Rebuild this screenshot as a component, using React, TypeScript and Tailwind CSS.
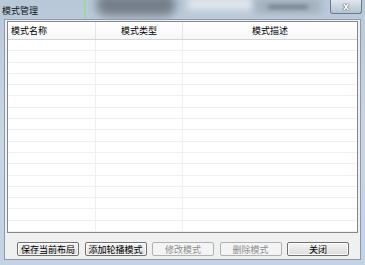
import React from 'react';

const FONT = { fontFamily: '"Noto Sans CJK SC", "Noto Sans", sans-serif' };

const columns = [
  { label: '模式名称', width: 'w-[88px]', align: 'justify-start pl-[3px]' },
  { label: '模式类型', width: 'w-[87px]', align: 'justify-center' },
  { label: '模式描述', width: 'flex-1', align: 'justify-center' },
];

const buttons = [
  { label: '保存当前布局', disabled: false },
  { label: '添加轮播模式', disabled: false },
  { label: '修改模式', disabled: true },
  { label: '删除模式', disabled: true },
  { label: '关闭', disabled: false },
];

const rows = Array.from({ length: 17 });

const App: React.FC = () => {
  return (
    <div
      className="relative w-[365px] h-[265px] overflow-hidden bg-gradient-to-b from-[#b9c8d8] via-[#c8d6e4] to-[#c3d3e4] text-[9px] leading-none text-black"
      style={FONT}
    >
      {/* blurred desktop behind the glass frame */}
      <div className="absolute left-[84px] top-0 w-[2px] h-[19px] bg-[#9fd6a8] blur-[0.5px]" />
      <div className="absolute left-[96px] top-[-6px] w-[80px] h-[22px] rounded-full bg-[#5d6670] blur-[5px] opacity-75" />
      <div className="absolute left-[188px] top-[-2px] w-[64px] h-[12px] bg-[#e0e6ec] blur-[3px]" />
      <div className="absolute left-[255px] top-[-2px] w-[66px] h-[16px] bg-[#a6b2bf] blur-[3px]" />
      <div className="absolute left-[268px] top-[5px] w-[40px] h-[4px] bg-[#6f7b88] blur-[2px]" />

      {/* close button */}
      <div className="absolute left-[330px] top-0 w-[32px] h-[14px] rounded-b-[3px] border border-t-0 border-[#6b7a8c] bg-gradient-to-b from-[#dfe6ee] to-[#b5c2d1] flex items-center justify-center">
        <span
          className="text-[10px] font-bold text-white [text-shadow:0_0_1px_#2c3a4a,0_0_1px_#2c3a4a]"
          style={{ fontFamily: '"DejaVu Sans", sans-serif' }}
        >
          x
        </span>
      </div>

      <div className="relative flex flex-col h-full">
        {/* title bar */}
        <div className="h-[19px] flex items-center pl-[2px] pt-[1px] text-[#101820]">模式管理</div>

        {/* client area */}
        <div className="mx-[4px] h-[241px] flex flex-col bg-[#f0f0f0] border border-[#8c9aab] px-[2px] pt-[1px]">
          {/* list view */}
          <div className="h-[212px] flex flex-col bg-white border border-[#828790] overflow-hidden">
            <div className="h-[18px] shrink-0 flex border-b border-[#d5d5d5] bg-gradient-to-b from-white to-[#f6f7f9]">
              {columns.map((c, i) => (
                <div
                  key={c.label}
                  className={`${c.width} ${c.align} flex items-center ${i < 2 ? 'border-r border-[#e3e5e8]' : ''}`}
                >
                  {c.label}
                </div>
              ))}
            </div>
            {rows.map((_, r) => (
              <div key={r} className="h-[11.3px] flex border-b border-[#f0f0f0] shrink-0">
                <div className="w-[88px] border-r border-[#f0f0f0]" />
                <div className="w-[87px] border-r border-[#f0f0f0]" />
                <div className="flex-1" />
              </div>
            ))}
          </div>

          {/* buttons */}
          <div className="mt-[9px] flex pl-[10px] gap-[5.5px]">
            {buttons.map((b) => (
              <div
                key={b.label}
                className={`w-[62px] h-[14px] rounded-[2px] border flex items-center justify-center ${
                  b.disabled
                    ? 'border-[#adb2b5] bg-[#f4f4f4] text-[#8d8d8d]'
                    : 'border-[#707070] bg-gradient-to-b from-[#f4f4f4] to-[#dcdcdc] text-black shadow-[inset_0_0_0_1px_#fcfcfc]'
                }`}
              >
                {b.label}
              </div>
            ))}
          </div>
        </div>
      </div>
    </div>
  );
};

export default App;
